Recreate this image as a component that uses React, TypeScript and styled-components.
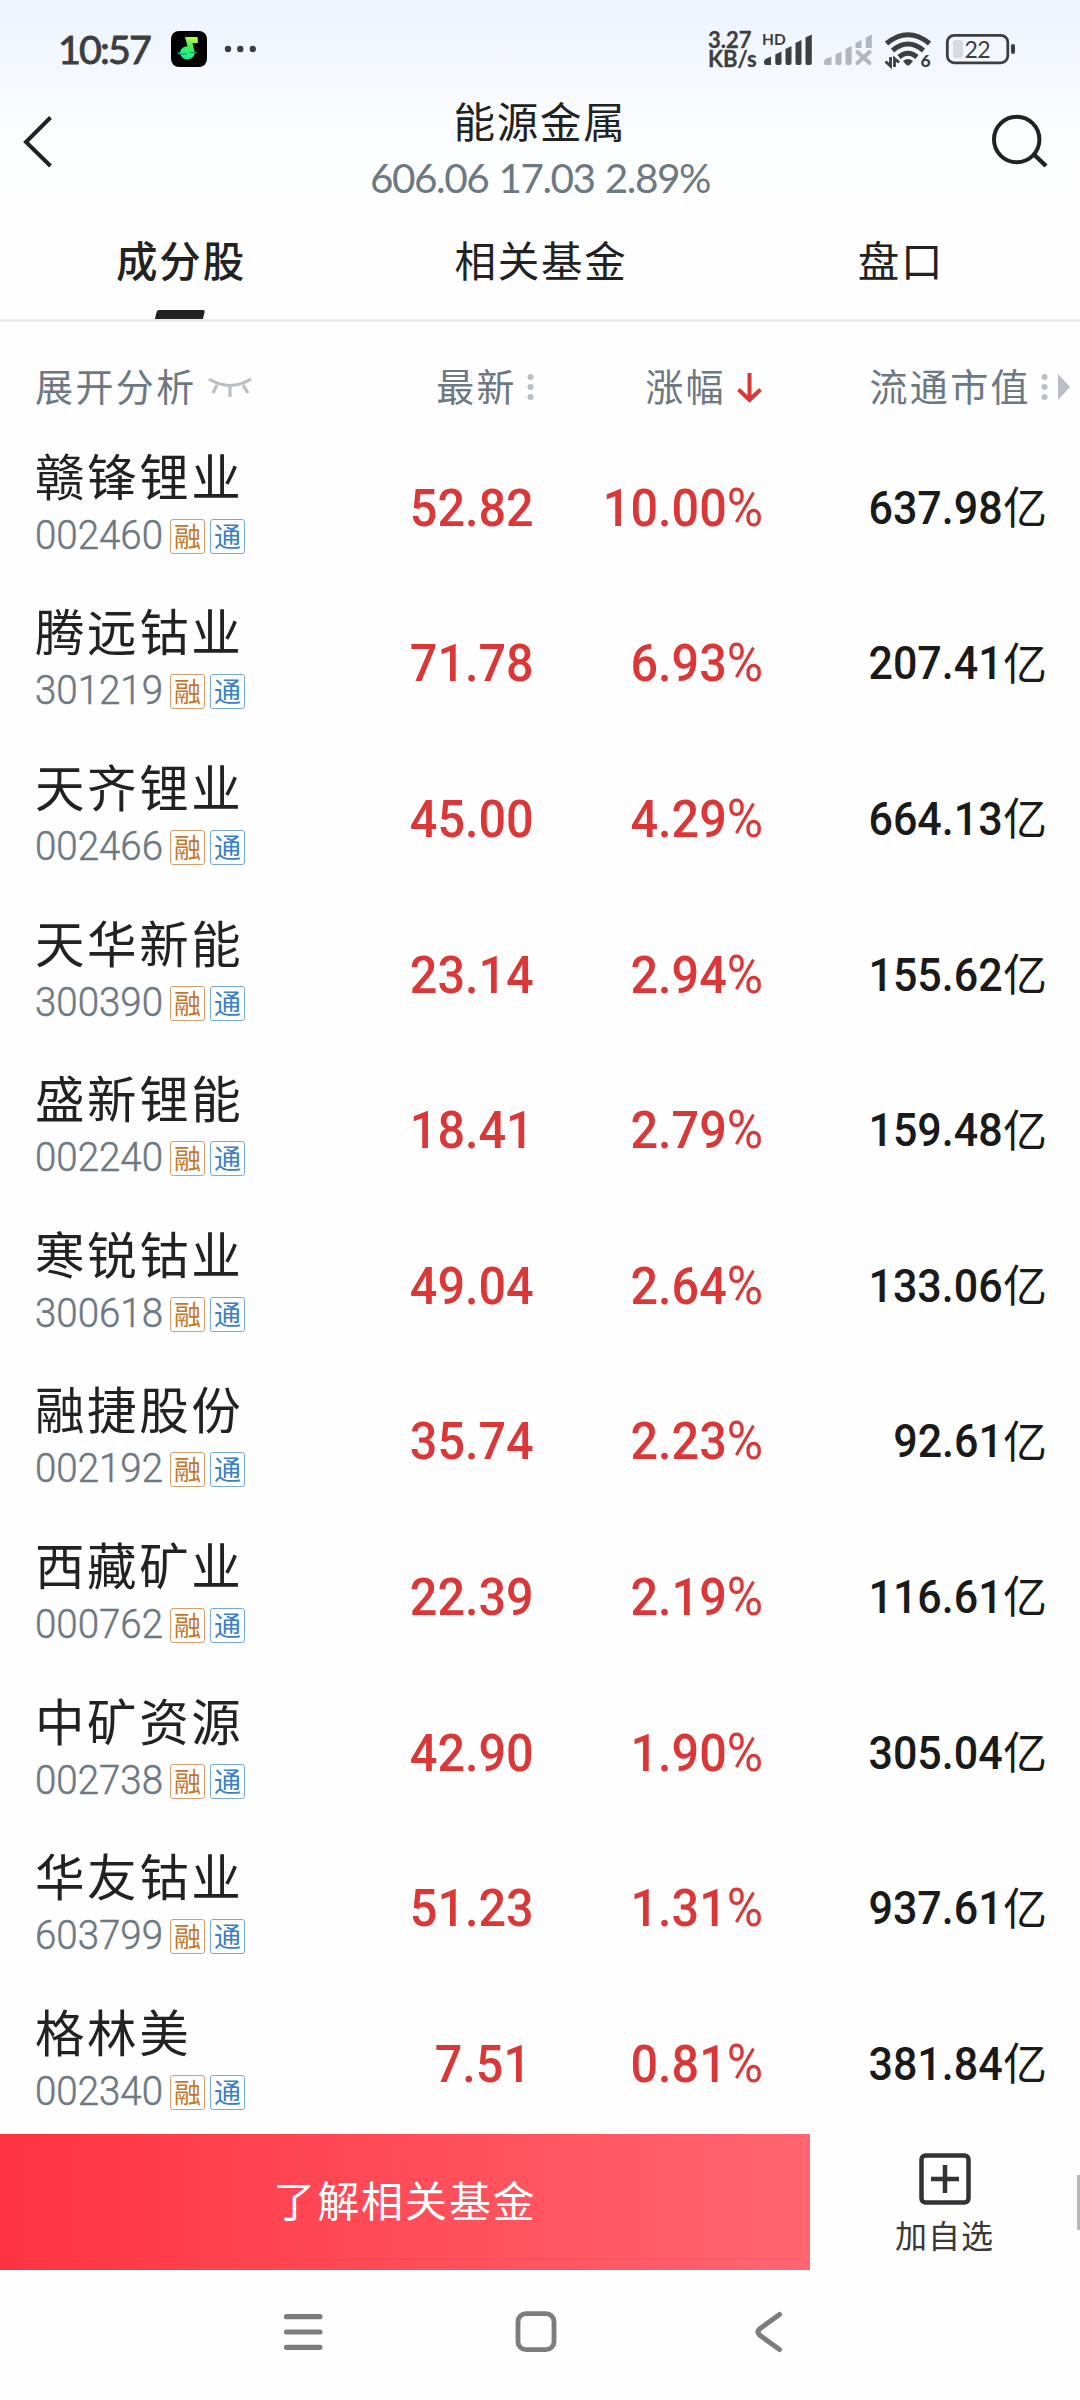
import React from "react";
import styled, { createGlobalStyle } from "styled-components";

const cjk = '"Noto Sans CJK SC", sans-serif';

const GlobalStyle = createGlobalStyle`
  * { box-sizing: border-box; }
  body { margin: 0; background: #fefefe; }
`;

const Screen = styled.div`
  display: flex;
  flex-direction: column;
  width: 1080px;
  height: 2400px;
  overflow: hidden;
  font-family: ${cjk};
  color: #222;
  background: linear-gradient(180deg, #edf4fe 0, #f6f9fe 80px, #fdfeff 150px, #fefefe 200px);
`;

const StatusBar = styled.header`
  display: flex;
  align-items: center;
  height: 98px;
  padding-left: 58px;
  color: #3d3e40;
`;

const Clock = styled.div`
  width: 113px;
  font: 400 39.5px/48px Lato, sans-serif;
  letter-spacing: -1.9px;
  -webkit-text-stroke: 0.9px #3d3e40;
`;

const Signals = styled.div`
  display: flex;
  align-items: center;
  margin-left: auto;
`;

const Speed = styled.div`
  display: flex;
  flex-direction: column;
  width: 52px;
  font: 700 22px/18.5px Lato, sans-serif;
  margin-top: 1px;
  -webkit-text-stroke: 0.3px #3d3e40;
`;

const TitleBar = styled.div`
  display: grid;
  grid-template-columns: 120px 1fr 120px;
  height: 118px;
`;

const IconSlot = styled.div<{ $end?: boolean }>`
  display: flex;
  justify-content: ${(p) => (p.$end ? "flex-end" : "flex-start")};
  padding: 14px ${(p) => (p.$end ? "30px" : "0")} 0 ${(p) => (p.$end ? "0" : "20px")};
`;

const Heading = styled.div`
  display: flex;
  flex-direction: column;
  align-items: center;
  margin-top: -2px;
`;

const Title = styled.h1`
  margin: 0;
  font-size: 41.5px;
  font-weight: 400;
  line-height: 48px;
  letter-spacing: 1.8px;
`;

const Quote = styled.div`
  margin-top: 10px;
  font: 400 40.5px/48px Lato, sans-serif;
  letter-spacing: -1.5px;
  word-spacing: 1.5px;
  color: #6d7882;
`;

const Tabs = styled.nav`
  display: grid;
  grid-template-columns: repeat(3, 1fr);
  height: 106px;
  border-bottom: 3px solid #ececec;
`;

const Tab = styled.div<{ $active?: boolean }>`
  display: flex;
  flex-direction: column;
  align-items: center;
  justify-content: space-between;
  padding-top: 19px;
  padding-left: 2px;
  font-size: 41.5px;
  font-weight: ${(p) => (p.$active ? 500 : 400)};
  line-height: 48px;
  letter-spacing: 1.8px;
`;

const Marker = styled.i`
  width: 48px;
  height: 9px;
  margin-right: 2px;
  border-radius: 2px 2px 0 0;
  background: #222;
  transform: skewX(-14deg);
`;

const HeadRow = styled.div`
  display: grid;
  grid-template-columns: 35px 365px 134px 230px 1fr;
  align-items: center;
  height: 108px;
  padding-bottom: 21px;
  padding-top: 43px;
  font-size: 38px;
  line-height: 44px;
  letter-spacing: 2.4px;
  color: #6d7882;
`;

const HeadCell = styled.div<{ $right?: boolean }>`
  display: flex;
  align-items: center;
  gap: 10px;
  justify-content: ${(p) => (p.$right ? "flex-end" : "flex-start")};
  white-space: nowrap;
  svg { display: block; flex: none; }
`;

const HeadLabel = styled.span`
  margin-top: -5px;
`;

const List = styled.main`
  flex: 1;
  min-height: 0;
  overflow: hidden;
`;

const Row = styled.div`
  display: grid;
  grid-template-columns: 35px 365px 131px 232px 1fr;
  align-items: center;
  height: 155.6px;
`;

const Stock = styled.div`
  grid-column: 2;
  display: flex;
  flex-direction: column;
  margin-top: -8px;
`;

const Name = styled.div`
  font-size: 49.5px;
  line-height: 58px;
  letter-spacing: 2.6px;
`;

const CodeLine = styled.div`
  display: flex;
  align-items: center;
  height: 54px;
  margin-top: 4px;
`;

const Code = styled.span`
  width: 135px;
  font: 300 41.5px/48px Roboto, sans-serif;
  -webkit-text-stroke: 0.5px #6d7882;
  transform: scaleX(0.927);
  transform-origin: left center;
  white-space: nowrap;
  color: #6d7882;
`;

const Badge = styled.span<{ $color: string; $line: string }>`
  display: flex;
  align-items: center;
  justify-content: center;
  width: 35px;
  height: 35px;
  margin-right: 5px;
  margin-top: 3px;
  padding-bottom: 1px;
  border: 1.5px solid ${(p) => p.$line};
  border-radius: 3px;
  color: ${(p) => p.$color};
  font-size: 27px;
  line-height: 30px;
`;

const Num = styled.div`
  text-align: right;
  font: 500 52.5px/60px Roboto, sans-serif;
  transform: scaleX(0.925);
  transform-origin: right center;
  color: #da3838;
`;

const Percent = styled.span`
  font-weight: 400;
  font-size: 53.5px;
`;

const Cap = styled.div`
  display: flex;
  align-items: center;
  justify-content: flex-end;
  padding-right: 33px;
  font: 500 47px/60px Roboto, sans-serif;
  color: #1a1a1a;
`;

const Amount = styled.span`
  transform: scaleX(0.915);
  transform-origin: right center;
`;

const Unit = styled.span`
  font-family: ${cjk};
  font-weight: 400;
  font-size: 44px;
  margin-top: -5px;
`;

const ActionBar = styled.footer`
  display: grid;
  grid-template-columns: 810px 1fr 3px;
  align-items: center;
  height: 136px;
  background: #fefefe;
`;

const FundButton = styled.div`
  display: flex;
  align-items: center;
  justify-content: center;
  height: 136px;
  padding-bottom: 7px;
  color: #fff;
  font-size: 42px;
  letter-spacing: 1.9px;
  background: linear-gradient(90deg, #ff3341, #ff6670);
`;

const AddButton = styled.div`
  display: flex;
  flex-direction: column;
  align-items: center;
  height: 136px;
  padding-top: 18px;
  padding-left: 2px;
  gap: 9px;
  font-size: 32px;
  line-height: 38px;
  letter-spacing: 1px;
  color: #383838;
`;

const ScrollThumb = styled.i`
  height: 55px;
  background: #b8b8b8;
`;

const NavBar = styled.div`
  display: grid;
  grid-template-columns: 232px 238px 1fr;
  align-items: flex-start;
  height: 130px;
  padding: 38px 0 0 280px;
  background: #fefefe;
`;

type StockRow = [name: string, code: string, price: string, change: string, cap: string];

const stocks: StockRow[] = [
  ["赣锋锂业", "002460", "52.82", "10.00", "637.98"],
  ["腾远钴业", "301219", "71.78", "6.93", "207.41"],
  ["天齐锂业", "002466", "45.00", "4.29", "664.13"],
  ["天华新能", "300390", "23.14", "2.94", "155.62"],
  ["盛新锂能", "002240", "18.41", "2.79", "159.48"],
  ["寒锐钴业", "300618", "49.04", "2.64", "133.06"],
  ["融捷股份", "002192", "35.74", "2.23", "92.61"],
  ["西藏矿业", "000762", "22.39", "2.19", "116.61"],
  ["中矿资源", "002738", "42.90", "1.90", "305.04"],
  ["华友钴业", "603799", "51.23", "1.31", "937.61"],
  ["格林美", "002340", "7.51", "0.81", "381.84"],
];

const AppIcon = () => (
  <svg width="36" height="36" viewBox="0 0 36 36">
    <defs>
      <linearGradient id="note" x1="0.7" y1="0" x2="0.3" y2="1">
        <stop offset="0" stopColor="#c4fa3c" />
        <stop offset="0.4" stopColor="#3df25a" />
        <stop offset="1" stopColor="#14eda8" />
      </linearGradient>
    </defs>
    <rect width="36" height="36" rx="8" fill="#000" />
    <path
      d="M14 6H26.5L27 12H21.5L23.5 20.5L27 21.6L23.7 22.6A7.6 7.6 0 0 1 9.2 23.2L6 22.3L9 21.2A7.5 7.5 0 0 1 16.5 15.2Z"
      fill="url(#note)"
    />
    <path d="M8 23H16M19 21.5H26" stroke="#087a3c" strokeWidth="0.8" />
  </svg>
);

const MoreDots = () => (
  <svg width="70" height="36" viewBox="0 0 70 36" fill="#3d3e40">
    <circle cx="21" cy="18" r="3.2" />
    <circle cx="33.3" cy="18" r="3.2" />
    <circle cx="45.8" cy="18" r="3.2" />
  </svg>
);

/* Cellular, second SIM, Wi-Fi and battery; one user unit is one screen pixel */
const StatusIcons = () => (
  <svg width="320" height="48" viewBox="760 25 320 48" fill="#3d3e40">
    <text x="762" y="45" fontFamily="Lato, sans-serif" fontWeight="700" fontSize="15.500">HD</text>
    <path d="M764 62Q764 59.500 766 58.700L771 56.500V65H766Q764 65 764 63ZM775.300 54.500L781.500 51.500V63Q781.500 65 779.500 65H777.300Q775.300 65 775.300 63ZM785.500 49L791.500 46V63Q791.500 65 789.500 65H787.500Q785.500 65 785.500 63ZM795.500 43L801.500 40V63Q801.500 65 799.500 65H797.500Q795.500 65 795.500 63ZM805.500 37.500L811.800 34.500V63Q811.800 65 809.800 65H807.500Q805.500 65 805.500 63Z" />
    <g fill="#b3b6ba">
      <path d="M824 62Q824 59.500 826 58.700L831.500 56.500V65H826Q824 65 824 63ZM835.500 54.500L841.500 51.500V63Q841.500 65 839.500 65H837.500Q835.500 65 835.500 63ZM845.500 49L851.700 46V63Q851.700 65 849.700 65H847.500Q845.500 65 845.500 63ZM855.500 43L861.500 40V48H855.500ZM865.800 37.500L871.800 34.500V48H865.800Z" />
      <path d="M857.500 52L869.500 63M869.500 52L857.500 63" stroke="#b3b6ba" strokeWidth="4" strokeLinecap="round" />
    </g>
    <g fill="none" stroke="#3d3e40" strokeWidth="5">
      <path d="M886.500 43.500Q908 26 929.500 43.500" />
      <path d="M892.500 50.500Q908 37.500 923.500 50.500" />
      <path d="M899 57Q908 49.500 917 57" />
    </g>
    <path d="M903 61Q908 57 913 61L910 64.500Q908 66.500 906 64.500Z" />
    <path d="M890.500 57V66L885.500 61.500M894.500 67V58.500L899 62.500" fill="none" stroke="#3d3e40" strokeWidth="2.800" />
    <text x="920.500" y="67" fontFamily="Lato, sans-serif" fontWeight="900" fontSize="17.500">6</text>
    <rect x="947.300" y="35.300" width="60.500" height="27.500" rx="7" fill="none" stroke="#3d3e40" strokeWidth="2.800" />
    <rect x="953" y="40" width="10" height="18" rx="2.500" fill="#d6dbe1" />
    <rect x="1011" y="44" width="4" height="10" rx="2" />
    <text x="964.500" y="57.700" fontFamily="Lato, sans-serif" fontSize="23" letterSpacing="-0.700">22</text>
  </svg>
);

const Dots = () => (
  <svg width="7" height="28" viewBox="0 0 7 28" fill="#b9bfc5">
    <circle cx="3.500" cy="4" r="3" />
    <circle cx="3.500" cy="14" r="3" />
    <circle cx="3.500" cy="24" r="3" />
  </svg>
);

export default function App() {
  return (
    <>
      <GlobalStyle />
      <Screen>
        <StatusBar>
          <Clock>10:57</Clock>
          <AppIcon />
          <MoreDots />
          <Signals>
            <Speed>
              <span>3.27</span>
              <span>KB/s</span>
            </Speed>
            <StatusIcons />
          </Signals>
        </StatusBar>

        <TitleBar>
          <IconSlot>
            <svg width="36" height="60" viewBox="0 0 36 60" fill="none" stroke="#222" strokeWidth="4">
              <path d="M30.500 5.500L6 30L30.500 54" />
            </svg>
          </IconSlot>
          <Heading>
            <Title>能源金属</Title>
            <Quote>606.06 17.03 2.89%</Quote>
          </Heading>
          <IconSlot $end>
            <svg width="60" height="60" viewBox="0 0 60 60" fill="none" stroke="#222" strokeWidth="4">
              <circle cx="26.700" cy="27.500" r="22.700" />
              <path d="M44 42.500L56 54" strokeWidth="4.500" />
            </svg>
          </IconSlot>
        </TitleBar>

        <Tabs>
          <Tab $active>
            成分股
            <Marker />
          </Tab>
          <Tab>相关基金</Tab>
          <Tab>盘口</Tab>
        </Tabs>

        <HeadRow>
          <span />
          <HeadCell>
            <HeadLabel>展开分析</HeadLabel>
            <svg width="46" height="24" viewBox="0 0 46 24" fill="none" stroke="#b9bfc5" strokeWidth="3.200">
              <path d="M2 4Q23 17 44 4M10 10L6 18M23 12V22M36 10L41 18" />
            </svg>
          </HeadCell>
          <HeadCell $right>
            <HeadLabel>最新</HeadLabel>
            <Dots />
          </HeadCell>
          <HeadCell $right>
            <HeadLabel>涨幅</HeadLabel>
            <svg width="28" height="32" viewBox="0 0 28 32" fill="none" stroke="#da3838" strokeWidth="4">
              <path d="M13.500 2V28M2.500 18.500L13.500 29L24.500 18.500" />
            </svg>
          </HeadCell>
          <HeadCell $right>
            <HeadLabel>流通市值</HeadLabel>
            <Dots />
            <svg width="22" height="28" viewBox="0 0 22 28" fill="#b9bfc5">
              <path d="M0 1L12 14L0 27Z" />
            </svg>
          </HeadCell>
        </HeadRow>

        <List>
          {stocks.map(([name, code, price, change, cap]) => (
            <Row key={code}>
              <Stock>
                <Name>{name}</Name>
                <CodeLine>
                  <Code>{code}</Code>
                  <Badge $color="#c4772c" $line="#d2a06c">融</Badge>
                  <Badge $color="#3a80c4" $line="#78aad8">通</Badge>
                </CodeLine>
              </Stock>
              <Num>{price}</Num>
              <Num>{change}<Percent>%</Percent></Num>
              <Cap><Amount>{cap}</Amount><Unit>亿</Unit></Cap>
            </Row>
          ))}
        </List>

        <ActionBar>
          <FundButton>了解相关基金</FundButton>
          <AddButton>
            <svg width="54" height="54" viewBox="0 0 54 54" fill="none" stroke="#333" strokeWidth="4.500">
              <rect x="3.500" y="3.500" width="47" height="47" rx="4" />
              <path d="M13 27H41M27 13V41" />
            </svg>
            加自选
          </AddButton>
          <ScrollThumb />
        </ActionBar>

        <NavBar>
          <svg width="46" height="48" viewBox="0 0 46 48" stroke="#7d7d7d" strokeWidth="5.200" strokeLinecap="round">
            <path d="M6.500 8.700H40M6.500 24H40M6.500 39.300H40" />
          </svg>
          <svg width="48" height="48" viewBox="0 0 48 48" fill="none" stroke="#7d7d7d" strokeWidth="4.800">
            <rect x="6" y="5.700" width="36" height="36" rx="8" />
          </svg>
          <svg width="36" height="48" viewBox="0 0 36 48" fill="none" stroke="#7d7d7d" strokeWidth="5" strokeLinecap="round">
            <path d="M29.500 6.500L9.500 21Q6.500 24 9.500 27L29.500 41.500" />
          </svg>
        </NavBar>
      </Screen>
    </>
  );
}
